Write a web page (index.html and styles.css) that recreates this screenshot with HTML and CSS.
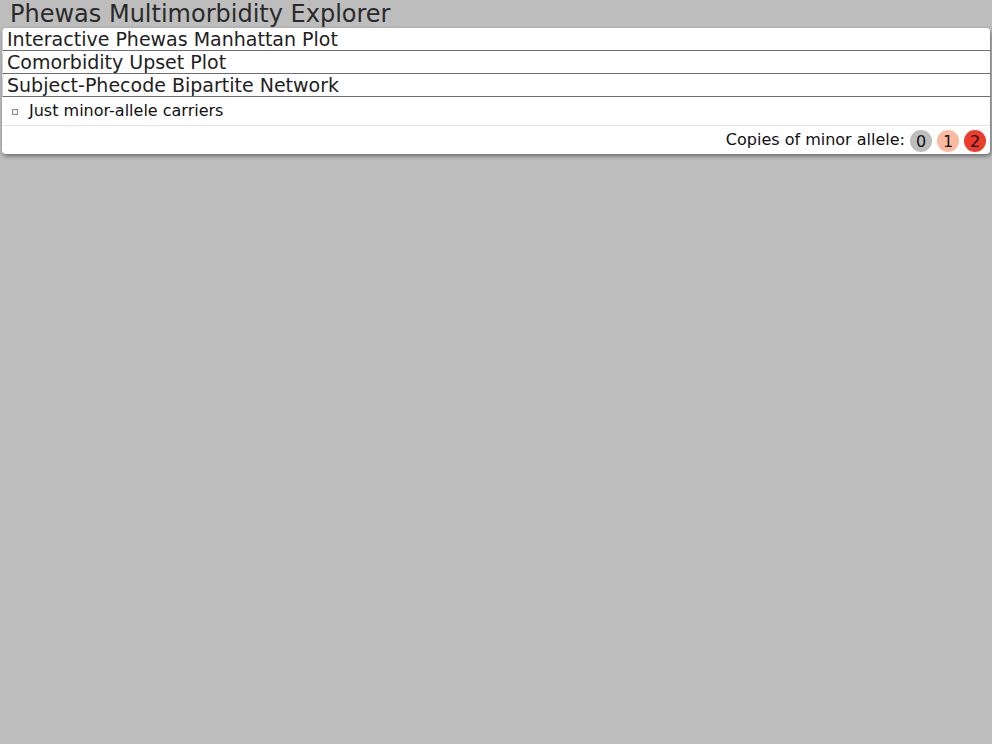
FILE: index.html
```html
<!DOCTYPE html>
<html>
<head>
<meta charset="utf-8">
<link rel="stylesheet" href="styles.css">
</head>
<body>
<h1 class="title">Phewas Multimorbidity Explorer</h1>
<div class="panel">
  <div class="tab">Interactive Phewas Manhattan Plot</div>
  <div class="tab">Comorbidity Upset Plot</div>
  <div class="tab">Subject-Phecode Bipartite Network</div>
  <div class="controls">
    <label class="check-row"><span class="box"></span><span>Just minor-allele carriers</span></label>
  </div>
  <div class="legend">
    <span class="legend-label">Copies of minor allele:</span>
    <span class="dot dot0">0</span>
    <span class="dot dot1">1</span>
    <span class="dot dot2">2</span>
  </div>
</div>
</body>
</html>
```
FILE: styles.css
```css
html, body {
  margin: 0;
  padding: 0;
  background: #bdbdbd;
  font-family: "DejaVu Sans", sans-serif;
  color: #222;
}
body {
  width: 992px;
  height: 744px;
}
.title {
  margin: 0;
  padding: 0 0 0 10px;
  font-size: 24px;
  font-weight: normal;
  line-height: 28px;
  height: 28px;
  color: #2a2a2a;
}
.panel {
  margin: 0 2px;
  background: #fff;
  border-radius: 4px;
  box-shadow: 1px 2px 4px rgba(0,0,0,0.45);
}
.tab {
  height: 22px;
  line-height: 22px;
  font-size: 19px;
  padding-left: 4px;
  background: #fff;
  border-radius: 4px 4px 0 0;
  border-bottom: 1px solid #6e6e6e;
  border-left: 1px solid #cfcfcf;
  color: #222;
  white-space: nowrap;
}
.controls {
  height: 26px;
  padding-bottom: 2px;
  border-bottom: 1px solid #e4e4e4;
  display: flex;
  align-items: center;
  padding-left: 10px;
}
.check-row {
  display: flex;
  align-items: center;
  font-size: 16px;
  color: #111;
}
.box {
  width: 4px;
  height: 4px;
  border: 1px solid #8a8a8a;
  background: #f4f4f4;
  margin-right: 11px;
  margin-top: 3px;
}
.legend {
  height: 26px;
  padding-bottom: 2px;
  display: flex;
  justify-content: flex-end;
  align-items: center;
  padding-right: 4px;
  font-size: 16px;
  color: #111;
}
.legend-label {
  margin-right: 5px;
}
.dot {
  width: 22px;
  height: 22px;
  border-radius: 50%;
  display: flex;
  align-items: center;
  justify-content: center;
  align-self: flex-end;
  margin-left: 5px;
  font-size: 16px;
  color: #111;
}
.dot0 { background: #bdbdbd; margin-left: 0; }
.dot1 { background: #fcbba1; }
.dot2 { background: #ef3b2c; }
```
